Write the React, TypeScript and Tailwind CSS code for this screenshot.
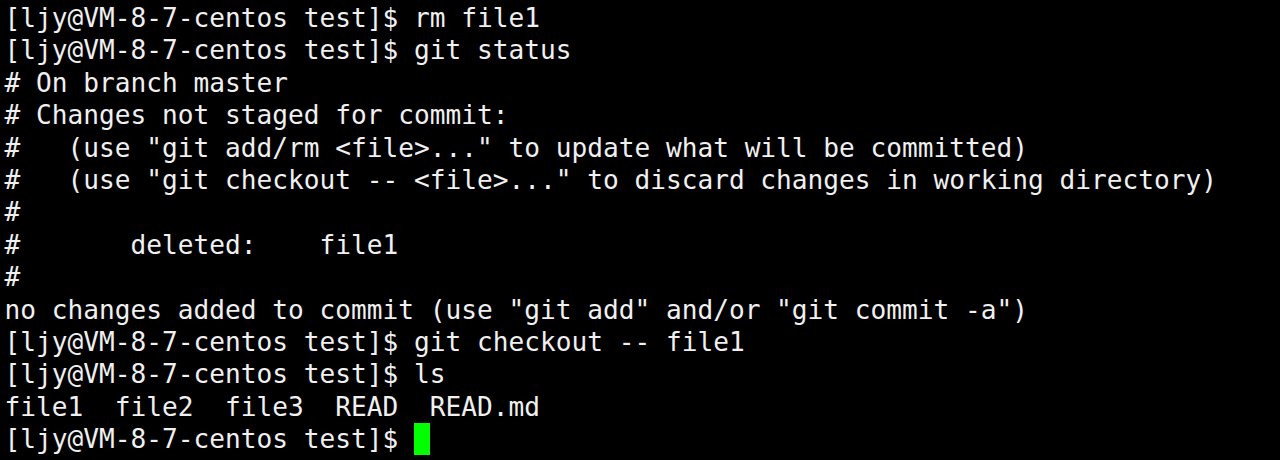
const lines: string[] = [
  "[ljy@VM-8-7-centos test]$ rm file1",
  "[ljy@VM-8-7-centos test]$ git status",
  "# On branch master",
  "# Changes not staged for commit:",
  '#   (use "git add/rm <file>..." to update what will be committed)',
  '#   (use "git checkout -- <file>..." to discard changes in working directory)',
  "#",
  "#       deleted:    file1",
  "#",
  'no changes added to commit (use "git add" and/or "git commit -a")',
  "[ljy@VM-8-7-centos test]$ git checkout -- file1",
  "[ljy@VM-8-7-centos test]$ ls",
  "file1  file2  file3  READ  READ.md",
];

export default function App() {
  return (
    <div
      className="w-[1280px] h-[460px] overflow-hidden bg-black text-[#f0f0f0] pl-[4.5px] pt-[2px] text-[26.16px] leading-[32.4px] whitespace-pre"
      style={{ fontFamily: '"DejaVu Sans Mono", monospace' }}
    >
      {lines.map((line, i) => (
        <div key={i} className="h-[32.4px]">
          {line}
        </div>
      ))}
      {/* prompt with block cursor */}
      <div className="h-[32.4px] flex">
        <span>[ljy@VM-8-7-centos test]$ </span>
        <span className="inline-block w-[15.75px] h-[32px] bg-[#00ff00]" />
      </div>
    </div>
  );
}
